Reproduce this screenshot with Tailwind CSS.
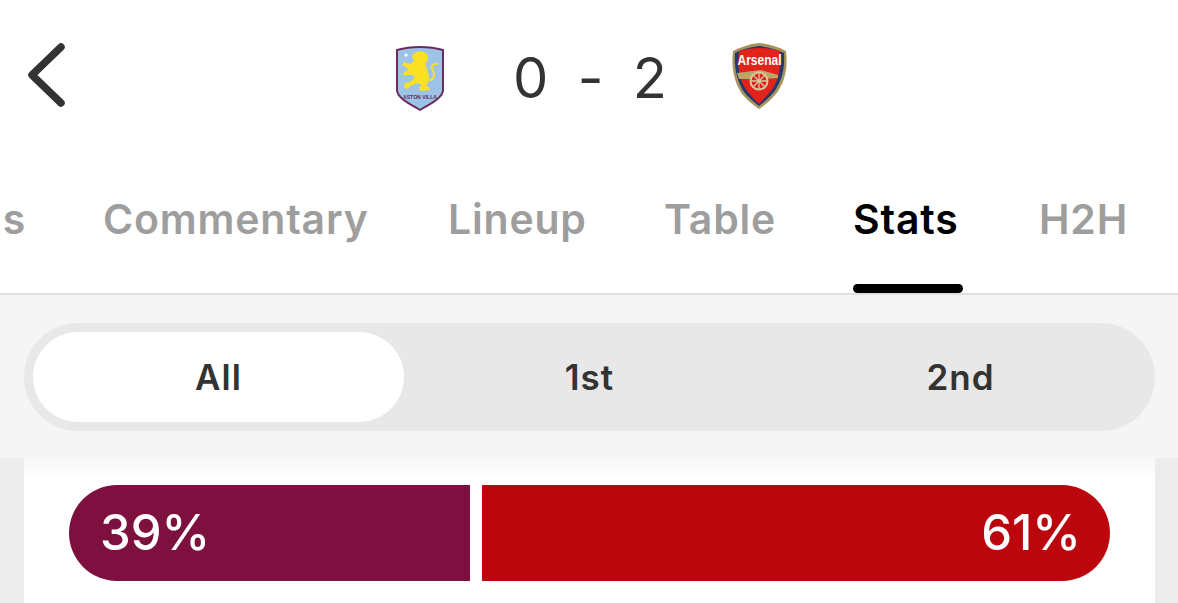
<!doctype html>
<html>
<head>
<meta charset="utf-8">
<script src="https://cdn.jsdelivr.net/npm/@tailwindcss/browser@4"></script>
</head>
<body class="m-0 bg-white">
<div class="w-[1178px] h-[603px] overflow-hidden font-['Inter',sans-serif] flex flex-col">
  <header class="h-[153px] shrink-0 relative flex items-start">
    <svg class="absolute left-[24px] top-[40px]" width="46" height="70" viewBox="0 0 46 70" fill="none"><path d="M37 7 L8 35 L37 63" stroke="#333" stroke-width="7.5" stroke-linecap="round" stroke-linejoin="round"/></svg>
    <div class="absolute left-[394px] top-[44px]">
      <svg width="52" height="68" viewBox="0 0 52 68">
        <path d="M3 6 C17 2 35 2 49 6 L49 46 C49 54 36 60 26 66 C16 60 3 54 3 46 Z" fill="#9dc4e6" stroke="#6b2a5c" stroke-width="2"/>
        <circle cx="12" cy="11" r="1.6" fill="#fff"/>
        <path d="M35 36 C41 36 41 29 38 25 C37 21 40 19 44 20" fill="none" stroke="#fbe122" stroke-width="2"/>
        <path d="M18 12 C20 7 30 6 33 10 C35 13 34 17 31 20 C33 24 35 30 35 36 L32 42 L35 43 L36 46 L26 47 L25 43 L28 41 L24 39 L16 42 L14 45 L10 44 L11 39 L16 38 L21 33 L18 31 L9 31 L10 28 L15 25 L8 21 L10 18 L16 20 L20 17 Z" fill="#fbe122"/>
        <text x="26" y="55" text-anchor="middle" font-family="Liberation Sans, sans-serif" font-size="6" font-weight="700" fill="#5d2a5f" textLength="34" lengthAdjust="spacingAndGlyphs">ASTON VILLA</text>
      </svg>
    </div>
    <div class="absolute left-[513px] top-[43px] w-[154px] flex justify-between text-[56px] leading-[70px] font-[380] text-[#333]"><span>0</span><span>-</span><span>2</span></div>
    <div class="absolute left-[731px] top-[42px]">
      <svg width="57" height="68" viewBox="0 0 57 68">
        <path d="M2 9 C10 5 18 2 28 1 C38 2 47 5 55 9 C57 26 54 40 45 52 C40 58 34 63 28 67 C22 63 16 58 11 52 C3 40 0 26 2 9 Z" fill="#a8945a"/>
        <path d="M4 11 C12 7 19 5 28 4 C37 5 45 7 53 11 C54 26 51 39 43 50 C38 56 33 60 28 64 C23 60 18 56 13 50 C6 39 3 26 4 11 Z" fill="#1f3a70"/>
        <path d="M8 9 C15 7 21 6 28 6 C35 6 42 7 49 9 C51 26 47 40 40 49 C36 54 32 58 28 62 C24 58 20 54 16 49 C9 40 6 26 8 9 Z" fill="#e2231a"/>
        <text x="28.5" y="23" text-anchor="middle" font-family="Liberation Sans, sans-serif" font-size="14" font-weight="700" fill="#fff" textLength="44" lengthAdjust="spacingAndGlyphs">Arsenal</text>
        <path d="M6 31 L30 28 L47 33 L47 36 L30 37 L8 37 Z" fill="#bba66a"/>
        <circle cx="28" cy="39" r="8.5" fill="#dd1f26" stroke="#d8c998" stroke-width="2"/>
        <path d="M28 30 V48 M19.5 39 H36.5 M22 33 L34 45 M34 33 L22 45" stroke="#d8c998" stroke-width="1.3"/>
      </svg>
    </div>
  </header>

  <nav class="h-[140px] shrink-0 relative text-[41px] leading-[46px] font-semibold tracking-[0.8px] text-[#9e9e9e]">
    <span class="absolute left-[-14px] top-[43px] w-[40px] text-right">s</span>
    <span class="absolute left-[103px] top-[43px]">Commentary</span>
    <span class="absolute left-[448px] top-[43px]">Lineup</span>
    <span class="absolute left-[664px] top-[43px]">Table</span>
    <span class="absolute left-[853px] top-[43px] text-black">Stats</span>
    <span class="absolute left-[1039px] top-[43px]">H2H</span>
    <span class="absolute left-[853px] top-[131px] w-[110px] h-[9px] rounded-full bg-black"></span>
  </nav>

  <div class="h-[2px] shrink-0 bg-[#e0e0e0]"></div>

  <section class="h-[163px] shrink-0 bg-[#f5f5f5] pt-[28px] pl-[24px] pr-[23px]">
    <div class="h-[108px] rounded-[54px] bg-[#e8e8e8] p-[9px] grid grid-cols-3 text-[35px] font-semibold tracking-[1px] text-[#333]">
      <div class="rounded-[45px] bg-white flex items-center justify-center">All</div>
      <div class="flex items-center justify-center">1st</div>
      <div class="flex items-center justify-center">2nd</div>
    </div>
  </section>

  <section class="flex-1 bg-[#ececec] pl-[24px] pr-[23px]">
    <div class="h-full bg-gradient-to-b from-[#f7f7f7] to-white to-[24px] pl-[45px] pr-[45px] pt-[27px]">
      <div class="flex h-[96px] gap-[12px] text-white text-[49px] font-medium">
        <div class="w-[401px] rounded-l-[48px] bg-[#7e1040] flex items-center pl-[31px]">39%</div>
        <div class="w-[628px] rounded-r-[48px] bg-[#bb060e] flex items-center justify-end pr-[29px]">61%</div>
      </div>
    </div>
  </section>
</div>
</body>
</html>
